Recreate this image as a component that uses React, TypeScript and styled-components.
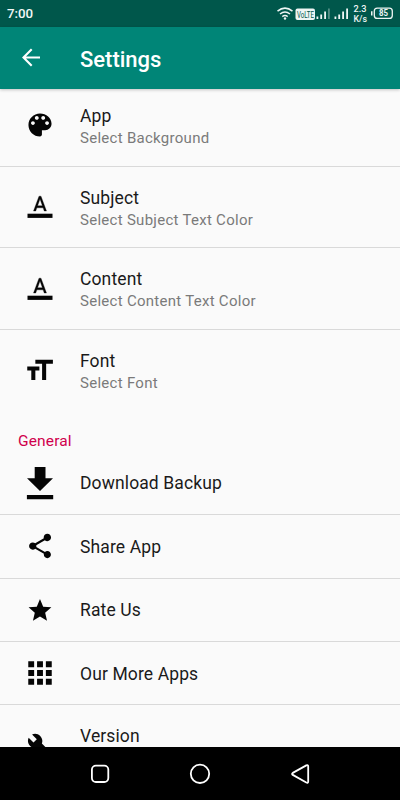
import React from "react";
import styled, { createGlobalStyle } from "styled-components";

const GlobalStyle = createGlobalStyle`
  * { box-sizing: border-box; }
  body { margin: 0; background: #fafafa; font-family: Roboto, sans-serif; }
`;

const Screen = styled.div`
  width: 400px;
  height: 800px;
  display: flex;
  flex-direction: column;
  overflow: hidden;
  background: #fafafa;
`;

const StatusBar = styled.div`
  height: 27px;
  flex: none;
  display: flex;
  align-items: center;
  justify-content: space-between;
  padding: 0 7px;
  background: #00574b;
  color: #f2f7f6;
`;

const Clock = styled.span`
  font-size: 13.3px;
  font-weight: 500;
  line-height: 27px;
`;

const StatusIcons = styled.svg`
  display: block;
  width: 117px;
  height: 27px;
`;

const AppBar = styled.header`
  height: 62px;
  flex: none;
  display: flex;
  align-items: center;
  padding: 0 0 0 19px;
  background: #008577;
  color: #fff;
  box-shadow: 0 1px 3px rgba(0, 0, 0, 0.22);
  z-index: 1;
`;

const BackIcon = styled.svg`
  width: 24px;
  height: 24px;
  margin: 0 37px 3px 0;
`;

const Title = styled.h1`
  margin: 3px 0 0;
  font-size: 22px;
  font-weight: 500;
  line-height: 28px;
`;

const List = styled.main`
  flex: 1;
  min-height: 0;
  overflow: hidden;
`;

const Row = styled.div<{ $tall?: boolean; $line?: boolean }>`
  height: ${(p) => (p.$tall ? "81.7px" : "63.4px")};
  display: flex;
  align-items: center;
  padding-left: 20px;
  border-bottom: 1px solid ${(p) => (p.$line ? "#d9d9d9" : "transparent")};
`;

const FirstGroup = styled.section`
  margin-top: -4px;
`;

const IconBox = styled.svg`
  width: 40px;
  height: 40px;
  flex: none;
  margin-right: 20px;
  fill: #050505;
`;

const Texts = styled.div<{ $tall?: boolean }>`
  height: ${(p) => (p.$tall ? "44px" : "24px")};
  margin-top: 1px;
`;

const Label = styled.div`
  font-size: 17.5px;
  font-weight: 400;
  line-height: 24px;
  letter-spacing: 0.12px;
  color: #1a1a1a;
`;

const Summary = styled.div`
  font-size: 15px;
  font-weight: 400;
  line-height: 20px;
  letter-spacing: 0.28px;
  color: #7a7a7a;
`;

const Category = styled.h2`
  margin: 0;
  height: 40px;
  padding: 19px 0 0 18px;
  font-size: 15.5px;
  font-weight: 400;
  line-height: 20px;
  letter-spacing: 0.15px;
  color: #d0004c;
`;

const NavBar = styled.nav`
  height: 53px;
  flex: none;
  display: flex;
  align-items: center;
  justify-content: center;
  gap: 76px;
  background: #000;
`;

const NavIcon = styled.svg`
  width: 24px;
  height: 24px;
  fill: none;
  stroke: #fff;
  stroke-width: 1.8;
  stroke-linejoin: round;
`;

/* Every glyph is drawn in a 40x40 box centred on its row. */
const glyphs = {
  palette: (
    <path transform="translate(4.600 4.600) scale(1.283)" d="M12 3c-4.970 0-9 4.030-9 9s4.030 9 9 9c.83 0 1.500-.67 1.500-1.500V16H16c2.760 0 5-2.240 5-5 0-4.420-4.030-8-9-8zm-5.500 9c-.83 0-1.500-.67-1.500-1.500S5.670 9 6.500 9 8 9.670 8 10.500 7.330 12 6.500 12zm3-4C8.670 8 8 7.330 8 6.500S8.670 5 9.500 5s1.500.67 1.500 1.500S10.330 8 9.500 8zm5 0c-.83 0-1.500-.67-1.500-1.500S13.670 5 14.500 5s1.500.67 1.500 1.500S15.330 8 14.500 8zm3 4c-.83 0-1.500-.67-1.500-1.500S16.670 9 17.500 9s1.500.67 1.500 1.500-.67 1.500-1.500 1.500z" />
  ),
  textColor: (
    <>
      <path transform="translate(8 6) scale(1 1.060)" stroke="#050505" strokeWidth=".3" d="M11 3L5.500 17h2.250l1.120-3h6.250l1.120 3h2.250L13 3h-2zm-1.380 9L12 5.670 14.380 12H9.620z" />
      <path d="M7.500 26.700h25v4.200h-25z" />
    </>
  ),
  textSize: (
    <path transform="translate(3.200 4.300) scale(1.350)" d="M9 4v3h5v12h3V7h5V4H9zm-6 8h3v7h3v-7h3V9H3v3z" />
  ),
  download: (
    <path d="M14.700 4h10.800v11.300h7.500L20 28 7 15.300h7.700zM6.900 32h26.300v4.200H6.900z" />
  ),
  share: (
    <path transform="translate(5.400 5.400) scale(1.220)" d="M18 16.080c-.76 0-1.440.3-1.960.77L8.910 12.700c.05-.23.09-.46.09-.7s-.04-.47-.09-.7l7.050-4.110c.54.5 1.250.81 2.040.81 1.660 0 3-1.340 3-3s-1.340-3-3-3-3 1.340-3 3c0 .24.04.47.09.7L8.040 9.810C7.500 9.310 6.790 9 6 9c-1.660 0-3 1.340-3 3s1.340 3 3 3c.79 0 1.500-.31 2.040-.81l7.120 4.160c-.05.21-.08.43-.08.65 0 1.610 1.310 2.920 2.920 2.920s2.920-1.310 2.920-2.920-1.310-2.920-2.920-2.920z" />
  ),
  star: (
    <path transform="translate(6.300 6.800) scale(1.140)" d="M12 17.270L18.180 21l-1.640-7.030L22 9.240l-7.190-.61L12 2 9.190 8.630 2 9.240l5.460 4.730L5.820 21z" />
  ),
  apps: (
    <path transform="translate(2.400 2.400) scale(1.467)" d="M4 8h4V4H4v4zm6 12h4v-4h-4v4zm-6 0h4v-4H4v4zm0-6h4v-4H4v4zm6 0h4v-4h-4v4zm6-10v4h4V4h-4zm-6 4h4V4h-4v4zm6 6h4v-4h-4v4zm0 6h4v-4h-4v4z" />
  ),
  wrench: (
    <path transform="translate(6.900 6.600) scale(1.100)" d="M22.700 19l-9.100-9.100c.9-2.300.4-5-1.500-6.900-2-2-5-2.400-7.400-1.300L9 6 6 9 1.600 4.700C.4 7.100.9 10.100 2.900 12.100c1.900 1.900 4.600 2.400 6.900 1.500l9.100 9.100c.4.4 1 .4 1.400 0l2.300-2.300c.5-.4.5-1.100.1-1.400z" />
  ),
};

type Item = { icon: keyof typeof glyphs; label: string; summary?: string; tall?: boolean; line?: boolean };

const appearance: Item[] = [
  { icon: "palette", label: "App", summary: "Select Background", tall: true, line: true },
  { icon: "textColor", label: "Subject", summary: "Select Subject Text Color", tall: true, line: true },
  { icon: "textColor", label: "Content", summary: "Select Content Text Color", tall: true, line: true },
  { icon: "textSize", label: "Font", summary: "Select Font", tall: true },
];

const general: Item[] = [
  { icon: "download", label: "Download Backup", line: true },
  { icon: "share", label: "Share App", line: true },
  { icon: "star", label: "Rate Us", line: true },
  { icon: "apps", label: "Our More Apps", line: true },
  { icon: "wrench", label: "Version", tall: true },
];

function Preference({ icon, label, summary, tall, line }: Item) {
  return (
    <Row $tall={tall} $line={line}>
      <IconBox viewBox="0 0 40 40">{glyphs[icon]}</IconBox>
      <Texts $tall={tall}>
        <Label>{label}</Label>
        {summary && <Summary>{summary}</Summary>}
      </Texts>
    </Row>
  );
}

function StatusGlyphs() {
  return (
    <StatusIcons viewBox="276 0 117 27" fill="#eef5f4" fontFamily="Roboto, sans-serif">
      <g fill="none" stroke="#eef5f4" strokeWidth="1.500">
        <path d="M277.500 11.200q7.500-6.200 15 0M280 14q5-4 10 0M282.300 16.600q2.700-2 5.400 0" />
      </g>
      <circle cx="285" cy="18.500" r="1.200" />
      <rect x="295.500" y="8.500" width="19.500" height="11.500" rx="2" />
      <text x="297" y="17.800" fontSize="9.500" textLength="17" lengthAdjust="spacingAndGlyphs" fill="#00574b">VoLTE</text>
      <path d="M316.500 16.500h1.800v2.500h-1.800zM320.300 14.500h1.800V19h-1.800zM324.200 11.500h1.800V19h-1.800z" />
      <path opacity=".35" d="M328 8.500h1.800V19H328z" />
      <path d="M334.500 16.500h1.800v2.500h-1.800zM338.300 14.500h1.800V19h-1.800zM342.200 11.500h1.800V19h-1.800zM346.200 8.500h1.800V19h-1.800z" />
      <text x="353.500" y="12.300" fontSize="9" fontWeight="500" textLength="13" lengthAdjust="spacingAndGlyphs">2.3</text>
      <text x="353.500" y="21.500" fontSize="9" fontWeight="500" textLength="13.500" lengthAdjust="spacingAndGlyphs">K/s</text>
      <path d="M371 11.300h1.500v4.200H371z" />
      <rect x="374.300" y="8.100" width="18" height="10.300" rx="3" fill="none" stroke="#eef5f4" strokeWidth="1.300" />
      <text x="379" y="16.400" fontSize="8.500" fontWeight="700" textLength="9" lengthAdjust="spacingAndGlyphs">85</text>
    </StatusIcons>
  );
}

export default function App() {
  return (
    <>
      <GlobalStyle />
      <Screen>
        <StatusBar>
          <Clock>7:00</Clock>
          <StatusGlyphs />
        </StatusBar>
        <AppBar>
          <BackIcon viewBox="0 0 24 24" fill="none" stroke="#fff" strokeWidth="2.100">
            <path d="M21 12.500H4.500M12.700 4.300L4.500 12.500l8.200 8.200" />
          </BackIcon>
          <Title>Settings</Title>
        </AppBar>
        <List>
          <FirstGroup>
            {appearance.map((item) => (
              <Preference key={item.label} {...item} />
            ))}
          </FirstGroup>
          <section>
            <Category>General</Category>
            {general.map((item) => (
              <Preference key={item.label} {...item} />
            ))}
          </section>
        </List>
        <NavBar>
          <NavIcon viewBox="0 0 24 24">
            <rect x="3.900" y="3.600" width="16.400" height="16.400" rx="4" />
          </NavIcon>
          <NavIcon viewBox="0 0 24 24">
            <circle cx="12" cy="11.800" r="9.200" />
          </NavIcon>
          <NavIcon viewBox="0 0 24 24">
            <path d="M18.300 3.400Q20.200 2.600 20.200 4.500v15q0 1.900-1.900 1L4.800 12.900q-1.400-1 0-2z" />
          </NavIcon>
        </NavBar>
      </Screen>
    </>
  );
}
